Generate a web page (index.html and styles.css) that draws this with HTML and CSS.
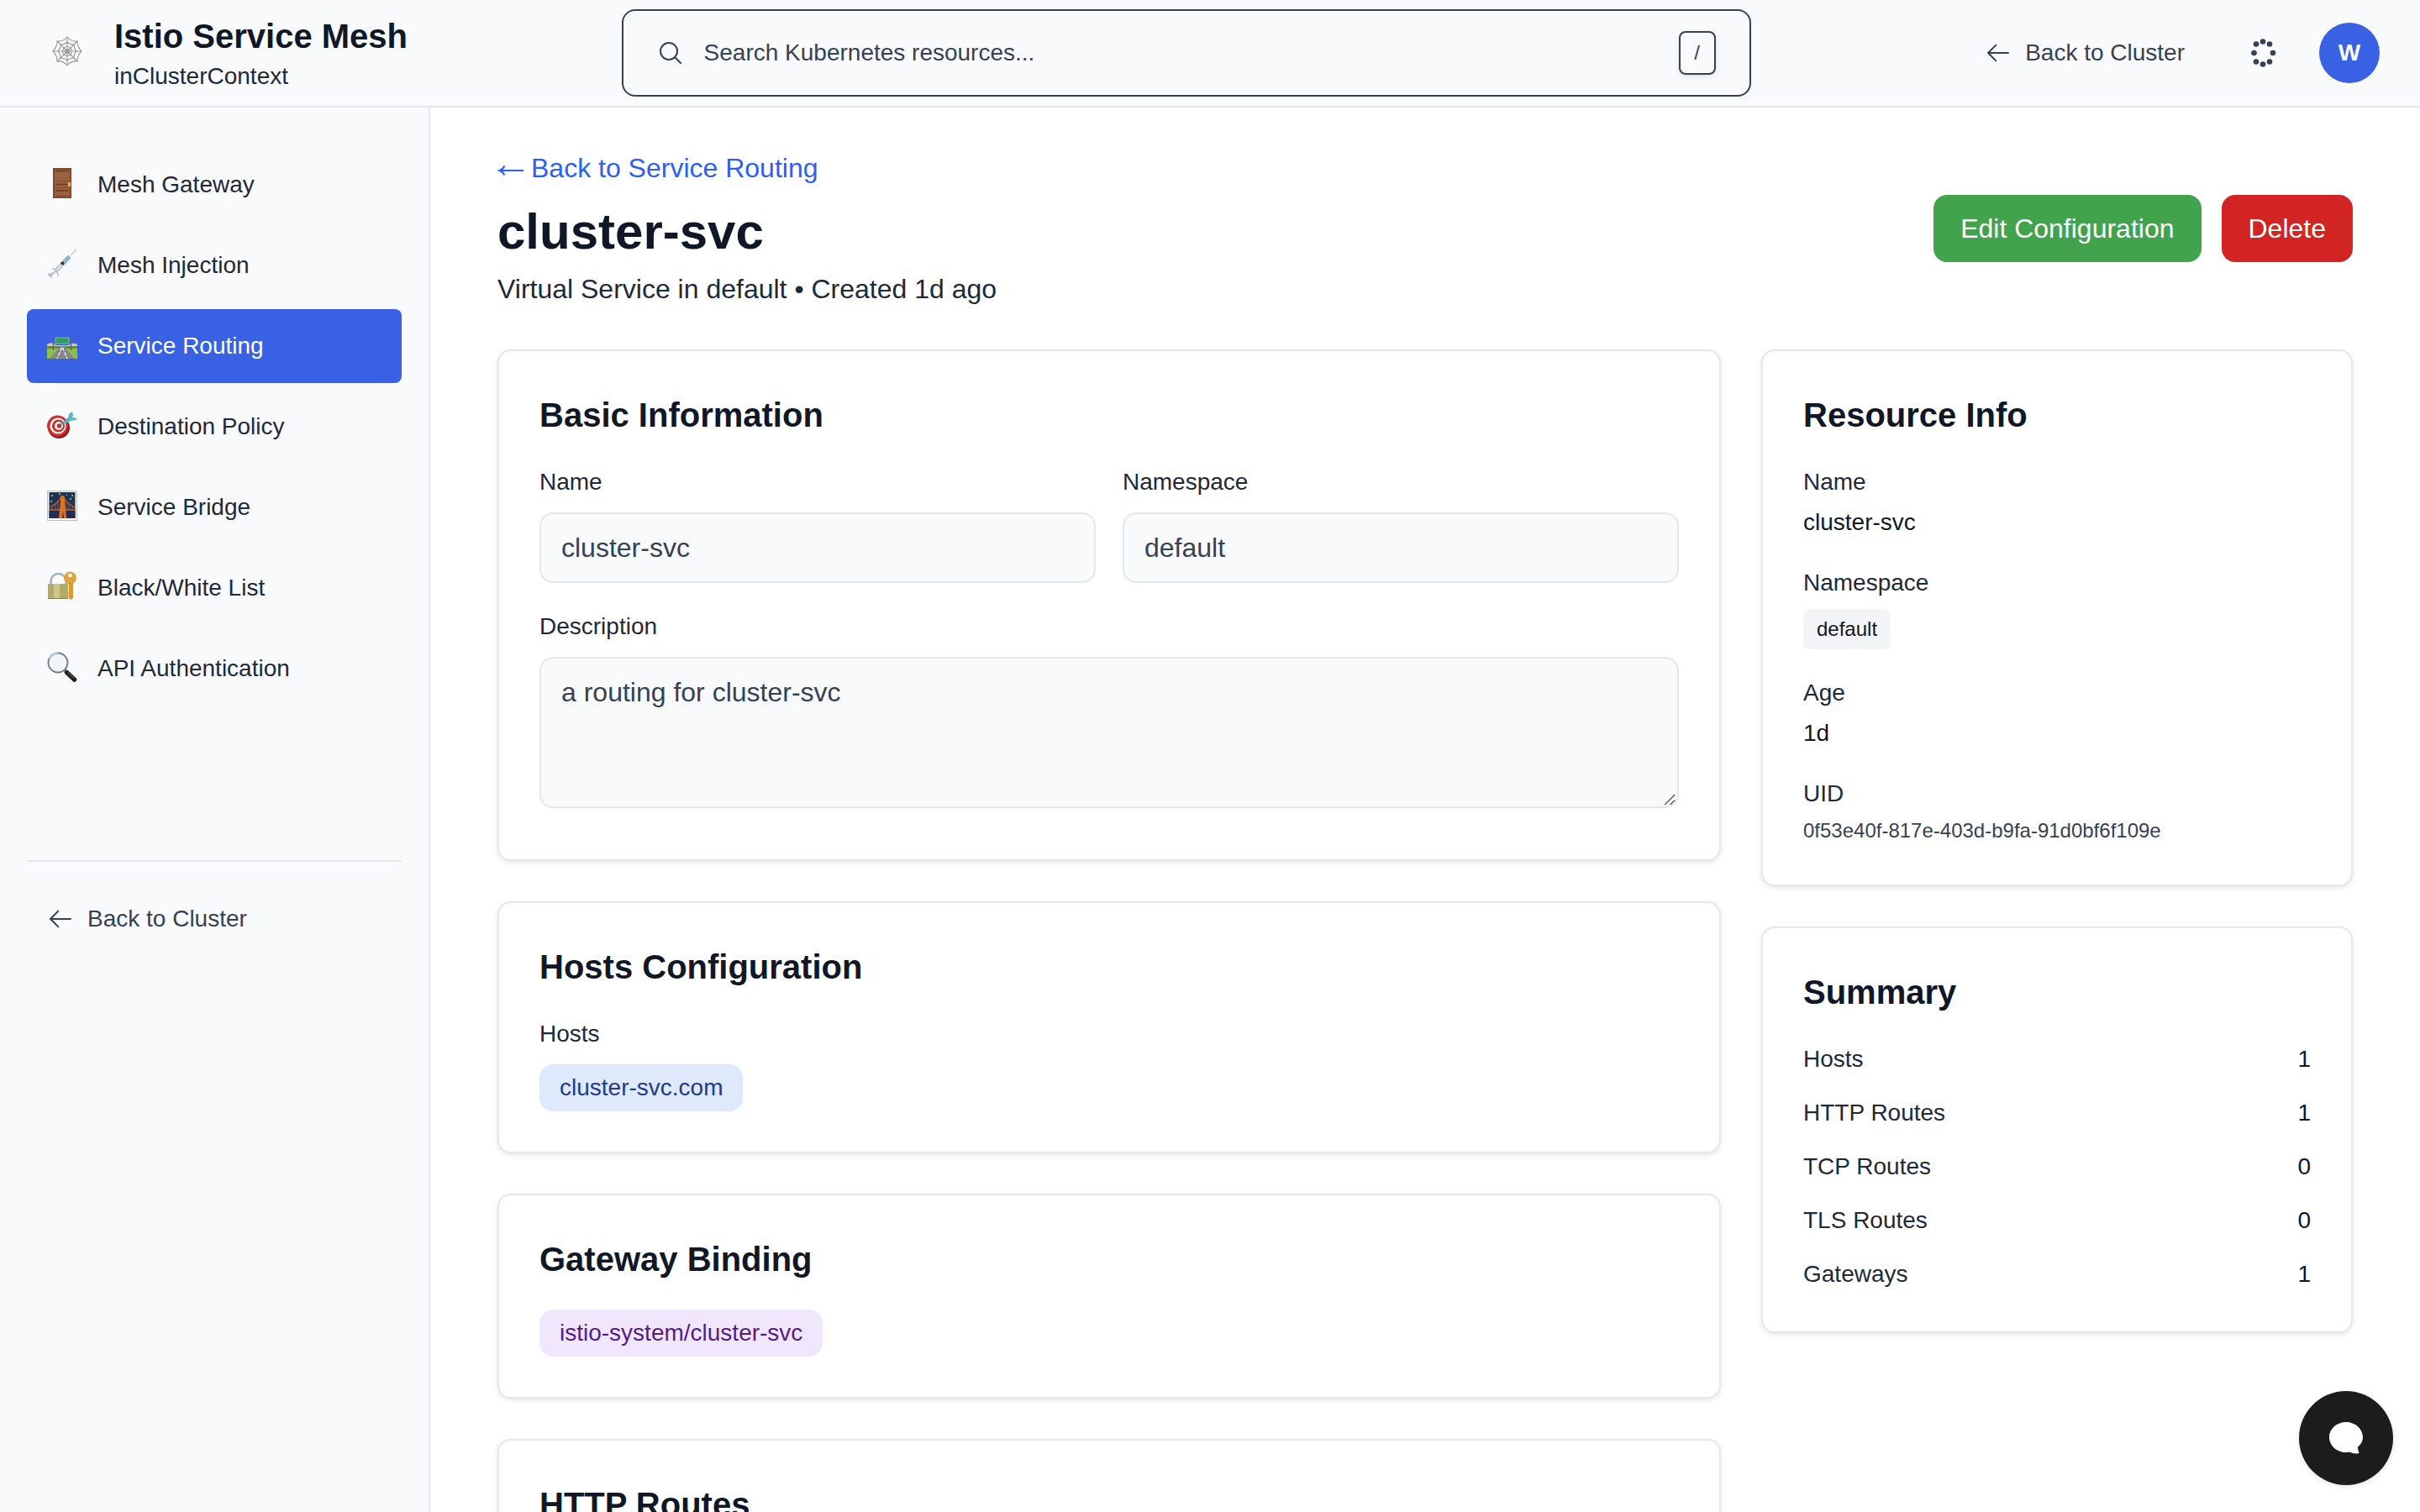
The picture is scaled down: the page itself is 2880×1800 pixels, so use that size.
FILE: index.html
```html
<!DOCTYPE html>
<html lang="en">
<head>
  <meta charset="utf-8">
  <title>cluster-svc - Istio Service Mesh</title>
  <meta name="viewport" content="width=device-width, initial-scale=1">
  <link rel="stylesheet" href="styles.css">
</head>
<body>
  <div class="app">
    <header class="topbar">
      <div class="brand">
        <div class="brand-logo">
          <svg class="emoji" viewBox="0 0 36 36" fill="none" stroke="#98999a" stroke-width="1.100" aria-hidden="true">
            <path d="M18 1v34M1 18h34M6 6l24 24M30 6L6 30"/>
            <path d="M18 1Q23 7 30 6Q30 13 35 18Q30 23 30 30Q23 29 18 35Q13 29 6 30Q6 23 1 18Q6 13 6 6Q13 7 18 1z"/>
            <path d="M18 7Q21 10 26 10Q26 15 29 18Q26 21 26 26Q21 26 18 29Q15 26 10 26Q10 21 7 18Q10 15 10 10Q15 10 18 7z"/>
            <circle cx="18" cy="18" r="5.500"/>
            <circle cx="18" cy="18" r="2.500"/>
          </svg>
        </div>
        <div>
          <div class="brand-title">Istio Service Mesh</div>
          <div class="brand-context">inClusterContext</div>
        </div>
      </div>

      <label class="search">
        <svg class="icon" viewBox="0 0 24 24" aria-hidden="true"><path d="M21 21l-5.197-5.197m0 0A7.500 7.500 0 1 0 5.197 5.197a7.500 7.500 0 0 0 10.607 10.607z"/></svg>
        <input class="search-input" type="text" placeholder="Search Kubernetes resources..." aria-label="Search Kubernetes resources">
        <kbd class="search-key">/</kbd>
      </label>

      <div class="actions">
        <a class="back-link" href="#cluster">
          <svg class="icon" viewBox="0 0 24 24" aria-hidden="true"><path d="M10 19l-7-7m0 0l7-7m-7 7h18"/></svg>
          <span>Back to Cluster</span>
        </a>
        <button class="icon-button" type="button" aria-label="Theme">
          <svg class="dots" viewBox="0 0 40 40" fill="#364153" aria-hidden="true">
            <circle cx="21" cy="6.500" r="3.300"/><circle cx="13" cy="9.500" r="3.300"/><circle cx="29" cy="9.500" r="3.300"/>
            <circle cx="10.500" cy="20" r="3.300"/><circle cx="33" cy="20" r="3.300"/>
            <circle cx="13" cy="30.500" r="3.300"/><circle cx="29" cy="30.500" r="3.300"/><circle cx="21" cy="33.500" r="3.300"/>
          </svg>
        </button>
        <button class="avatar" type="button">W</button>
      </div>
    </header>

    <div class="body">
      <aside class="sidebar">
        <nav class="nav">
          <a class="nav-item" href="#gateway">
            <svg class="emoji nav-icon" viewBox="0 0 36 36" aria-hidden="true">
              <rect x="7" width="22" height="36" fill="#7c4a2c"/>
              <rect x="9" y="2" width="18" height="32" fill="#9a6140"/>
              <path d="M10 3.500h16M10 19.500h16M10 27h16" stroke="#6a3b22" stroke-width="1.500"/>
              <path d="M10 16h16M10 23.500h16M10 33h16" stroke="#80492b"/>
              <rect x="25" y="17" width="3" height="5" fill="#e2b63c"/>
            </svg>
            <span>Mesh Gateway</span>
          </a>
          <a class="nav-item" href="#injection">
            <svg class="emoji nav-icon" viewBox="0 0 36 36" aria-hidden="true">
              <path d="M28 8L35 1" stroke="#aeb4b8" stroke-width="1"/>
              <path d="M9 25L25 8l3 3L12 28z" fill="#d5e2ec" stroke="#9aa5ad"/>
              <path d="M19 15l6-7 3 3-6 7z" fill="#8db7dc"/>
              <path d="M5.500 24.500q3-2 6 3t.500 5M7 30l5-5" fill="none" stroke="#b9bdc0" stroke-width="1.500"/>
              <path d="M1.500 30l4 4M3.500 32.500l4-4" stroke="#b9bcbe" stroke-width="2.500"/>
              <circle cx="18.500" cy="17.500" r="2" fill="#26303a"/>
            </svg>
            <span>Mesh Injection</span>
          </a>
          <a class="nav-item is-active" href="#routing" aria-current="page">
            <svg class="emoji nav-icon" viewBox="0 0 36 36" aria-hidden="true">
              <path d="M0 18q4-3 8-1l3 2h14l4-2q4-1 7 1v4H0z" fill="#d9c4bf"/>
              <rect y="20" width="36" height="15" fill="#8fbf45"/>
              <rect y="20" width="36" height="3" fill="#628e34"/>
              <path d="M16 20h4l13 15H3z" fill="#85878b"/>
              <path d="M17.500 22L12 35M18.500 22L24 35" stroke="#fff" stroke-width="1.200" stroke-dasharray="4 2"/>
              <path d="M7.500 10v15M28.500 10v15" stroke="#55667e" stroke-width="1.500"/>
              <rect x="10" y="10" width="16" height="7" fill="#2f9a62" stroke="#8cc4a8" stroke-width=".8"/>
            </svg>
            <span>Service Routing</span>
          </a>
          <a class="nav-item" href="#destination">
            <svg class="emoji nav-icon" viewBox="0 0 36 36" aria-hidden="true">
              <circle cx="14" cy="21" r="13" fill="#8e1d1a"/>
              <circle cx="12.500" cy="19" r="12.500" fill="#cf3330"/>
              <circle cx="13" cy="19" r="9.500" fill="#fff"/>
              <circle cx="13.500" cy="19" r="7.500" fill="#c92d2b"/>
              <circle cx="14" cy="19" r="5" fill="#fff"/>
              <circle cx="14.500" cy="19" r="2.800" fill="#c92d2b"/>
              <path d="M15 18.500L27 9" stroke="#3b9bab" stroke-width="2"/>
              <path d="M19 15l6-5 1-5 4-3 1 4-1 3 6 1-2 2-6 1-8 4z" fill="#56b8c6"/>
            </svg>
            <span>Destination Policy</span>
          </a>
          <a class="nav-item" href="#bridge">
            <svg class="emoji nav-icon" viewBox="0 0 36 36" aria-hidden="true">
              <rect x=".5" y=".5" width="35" height="35" fill="#fff" stroke="#b9bfc1"/>
              <rect x="2.500" y="2" width="31" height="31" fill="#1b3354"/>
              <rect x="2.500" y="24" width="31" height="9" fill="#232d52"/>
              <path d="M2.500 20Q13 16 17 7M33.500 20Q23 16 19 7M2.500 23h31" fill="none" stroke="#c8642a" stroke-width="1.300"/>
              <path d="M6 19v4M10 16v7M13 13v10M23 13v10M26 16v7M30 19v4" stroke="#b4602e" stroke-width=".9"/>
              <path d="M14 33L16.500 6h4L23 33h-3l-1-9-1 9z" fill="#e06f22"/>
              <path d="M5 6h2M14 4h2M29 6h2M4 13h2M27 10h2M23 5h1" stroke="#e8c34a" stroke-width="1.500"/>
            </svg>
            <span>Service Bridge</span>
          </a>
          <a class="nav-item" href="#list">
            <svg class="emoji nav-icon" viewBox="0 0 36 36" aria-hidden="true">
              <path d="M4.500 16v-4a9 9 0 0 1 18 0v4" fill="none" stroke="#9fb0c4" stroke-width="2.500"/>
              <rect x="1" y="15" width="24" height="18" rx="1" fill="#b3ab66"/>
              <rect x="8" y="15" width="7" height="18" fill="#cfc88d"/>
              <path d="M1 32.500h24" stroke="#858049" stroke-width="1"/>
              <circle cx="27.500" cy="8" r="7.500" fill="#dca43c"/>
              <path d="M26 13h5v19l-2.500 2-2.500-2-1-2 1-2-1-2 1-3z" fill="#d79b34"/>
              <circle cx="27.500" cy="5" r="2.300" fill="#fff"/>
            </svg>
            <span>Black/White List</span>
          </a>
          <a class="nav-item" href="#auth">
            <svg class="emoji nav-icon" viewBox="0 0 36 36" aria-hidden="true">
              <path d="M20 21l4 4" stroke="#8a8f94" stroke-width="3"/>
              <path d="M23.500 24.500l9 8.500" stroke="#222426" stroke-width="5.500" stroke-linecap="round"/>
              <path d="M25 24.500l7 6.500" stroke="#6b6e70" stroke-width="1"/>
              <circle cx="13" cy="13" r="11.500" fill="#f3f4f5" stroke="#6f7a88" stroke-width="1.800"/>
              <path d="M3 8a11.500 11.500 0 0 1 10-6.500" fill="none" stroke="#a9c4e6" stroke-width="1.800"/>
            </svg>
            <span>API Authentication</span>
          </a>
        </nav>
        <div class="sidebar-foot">
          <a class="back-link" href="#cluster">
            <svg class="icon" viewBox="0 0 24 24" aria-hidden="true"><path d="M10 19l-7-7m0 0l7-7m-7 7h18"/></svg>
            <span>Back to Cluster</span>
          </a>
        </div>
      </aside>

      <main class="main">
        <div class="page-head">
          <div>
            <a class="crumb" href="#routing">
              <svg class="crumb-arrow" viewBox="0 0 32 32" aria-hidden="true"><path d="M3 19h28M8.500 13.500q-2 4-6 5.500q4 1.500 6 5.500"/></svg>
              <span>Back to Service Routing</span>
            </a>
            <h1 class="page-title">cluster-svc</h1>
            <p class="page-sub">Virtual Service in default • Created 1d ago</p>
          </div>
          <div class="page-buttons">
            <button class="button button-edit" type="button">Edit Configuration</button>
            <button class="button button-delete" type="button">Delete</button>
          </div>
        </div>

        <div class="grid">
          <div class="column column-wide">
            <section class="card">
              <h2 class="card-title">Basic Information</h2>
              <div class="fields">
                <div>
                  <label class="label" for="name">Name</label>
                  <input class="field" id="name" type="text" value="cluster-svc" readonly>
                </div>
                <div>
                  <label class="label" for="namespace">Namespace</label>
                  <input class="field" id="namespace" type="text" value="default" readonly>
                </div>
              </div>
              <div>
                <label class="label" for="description">Description</label>
                <textarea class="field field-area" id="description" rows="3" readonly>a routing for cluster-svc</textarea>
              </div>
            </section>

            <section class="card">
              <h2 class="card-title">Hosts Configuration</h2>
              <div class="label">Hosts</div>
              <div class="tags"><span class="tag tag-blue">cluster-svc.com</span></div>
            </section>

            <section class="card">
              <h2 class="card-title">Gateway Binding</h2>
              <div class="tags"><span class="tag tag-purple">istio-system/cluster-svc</span></div>
            </section>

            <section class="card">
              <h2 class="card-title">HTTP Routes</h2>
            </section>
          </div>

          <div class="column">
            <section class="card">
              <h2 class="card-title">Resource Info</h2>
              <dl class="info">
                <div>
                  <dt class="info-key">Name</dt>
                  <dd class="info-value">cluster-svc</dd>
                </div>
                <div>
                  <dt class="info-key">Namespace</dt>
                  <dd><span class="chip">default</span></dd>
                </div>
                <div>
                  <dt class="info-key">Age</dt>
                  <dd class="info-value">1d</dd>
                </div>
                <div>
                  <dt class="info-key">UID</dt>
                  <dd class="info-uid">0f53e40f-817e-403d-b9fa-91d0bf6f109e</dd>
                </div>
              </dl>
            </section>

            <section class="card">
              <h2 class="card-title">Summary</h2>
              <dl class="summary">
                <div class="summary-row"><dt>Hosts</dt><dd>1</dd></div>
                <div class="summary-row"><dt>HTTP Routes</dt><dd>1</dd></div>
                <div class="summary-row"><dt>TCP Routes</dt><dd>0</dd></div>
                <div class="summary-row"><dt>TLS Routes</dt><dd>0</dd></div>
                <div class="summary-row"><dt>Gateways</dt><dd>1</dd></div>
              </dl>
            </section>
          </div>
        </div>
      </main>
    </div>

    <button class="chat" type="button" aria-label="Open chat">
      <svg class="chat-icon" viewBox="0 0 40 38" fill="#fff" aria-hidden="true">
        <path d="M20 0C9 0 0 8 0 18s9 18 20 18q2 0 4-.5 5 2.500 10 2 2-.5 1-2.500-1.500-3-1-5.500Q40 25 40 18C40 8 31 0 20 0z"/>
      </svg>
    </button>
  </div>
</body>
</html>
```

FILE: styles.css
```css
* {
  box-sizing: border-box;
}

body,
h1,
h2,
p,
dl,
dd {
  margin: 0;
}

body {
  font-family: "Liberation Sans", Arial, sans-serif;
  font-size: 32px;
  line-height: 48px;
  color: #101828;
  background: #fff;
}

a {
  color: inherit;
  text-decoration: none;
}

button,
input,
textarea {
  font: inherit;
  color: inherit;
}

button {
  border: 0;
  padding: 0;
  background: none;
  cursor: pointer;
}

.app {
  display: flex;
  flex-direction: column;
  height: 100vh;
  overflow: hidden;
}

.icon {
  flex: none;
  width: 32px;
  height: 32px;
  fill: none;
  stroke: #364153;
  stroke-width: 1.5;
  stroke-linecap: round;
  stroke-linejoin: round;
}

.emoji {
  flex: none;
  width: 36px;
  height: 36px;
}

/* Top bar */

.topbar {
  flex: none;
  display: flex;
  align-items: center;
  justify-content: space-between;
  height: 128px;
  padding: 0 48px;
  background: #f9fafc;
  border-bottom: 2px solid #e5e7ea;
}

.brand {
  display: flex;
  align-items: center;
  gap: 24px;
}

.brand-logo {
  display: flex;
  justify-content: center;
  width: 64px;
  padding-bottom: 4px;
}

.brand-title {
  font-size: 40px;
  font-weight: 700;
  line-height: 56px;
}

.brand-context {
  font-size: 28px;
  line-height: 40px;
  color: #1e2939;
}

.search {
  flex: 0 1 1344px;
  display: flex;
  align-items: center;
  gap: 24px;
  height: 104px;
  padding: 0 40px;
  border: 2px solid #364153;
  border-radius: 16px;
}

.search-input {
  flex: 1;
  min-width: 0;
  padding: 0;
  border: 0;
  outline: 0;
  background: none;
  font-size: 28px;
  line-height: 40px;
}

.search-input::placeholder {
  color: #364153;
  opacity: 1;
}

.search-key {
  display: flex;
  align-items: center;
  justify-content: center;
  width: 44px;
  height: 52px;
  border: 2px solid #364153;
  border-radius: 8px;
  font-family: inherit;
  font-size: 24px;
  line-height: 32px;
  color: #364153;
  box-shadow: 0 2px 6px rgba(0, 0, 0, 0.1);
}

.actions {
  display: flex;
  align-items: center;
  gap: 32px;
}

.back-link {
  display: flex;
  align-items: center;
  gap: 16px;
  padding: 24px;
  font-size: 28px;
  line-height: 40px;
  color: #364153;
}

.icon-button {
  display: flex;
  padding: 16px;
}

.dots {
  width: 40px;
  height: 40px;
}

.avatar {
  width: 72px;
  height: 72px;
  border-radius: 50%;
  background: #3861e3;
  color: #fff;
  font-size: 28px;
  font-weight: 700;
  line-height: 40px;
}

/* Sidebar */

.body {
  flex: 1;
  min-height: 0;
  display: flex;
}

.sidebar {
  flex: none;
  width: 512px;
  padding: 48px 32px;
  background: #f9fafc;
  border-right: 2px solid #e5e7ea;
}

.nav {
  display: flex;
  flex-direction: column;
  gap: 8px;
}

.nav-item {
  display: flex;
  align-items: center;
  gap: 24px;
  padding: 24px;
  border-radius: 8px;
  font-size: 28px;
  line-height: 40px;
  color: #1e2939;
}

.nav-icon {
  margin-bottom: 4px;
}

.is-active {
  background: #3861e3;
  color: #fff;
}

.sidebar-foot {
  margin-top: 184px;
  padding-top: 24px;
  border-top: 2px solid #e5e7ea;
}

/* Main column */

.main {
  flex: 1;
  min-width: 0;
  padding: 48px 80px;
  overflow-y: auto;
  scrollbar-width: none;
}

.page-head {
  display: flex;
  align-items: center;
  justify-content: space-between;
  margin-bottom: 48px;
}

.crumb {
  display: flex;
  align-items: center;
  gap: 8px;
  margin-bottom: 16px;
  color: #2b5ff6;
}

.crumb-arrow {
  flex: none;
  width: 32px;
  height: 32px;
  fill: none;
  stroke: currentColor;
  stroke-width: 2;
}

.page-title {
  margin-bottom: 8px;
  font-size: 60px;
  font-weight: 700;
  line-height: 72px;
}

.page-sub {
  color: #1e2939;
}

.page-buttons {
  display: flex;
  gap: 24px;
}

.button {
  padding: 16px 32px;
  border-radius: 16px;
  color: #fff;
}

.button-edit {
  background: #41a34b;
}

.button-delete {
  background: #d22422;
}

.grid {
  display: grid;
  grid-template-columns: repeat(3, minmax(0, 1fr));
  gap: 48px;
}

.column {
  display: flex;
  flex-direction: column;
  gap: 48px;
}

.column-wide {
  grid-column: span 2;
}

.card {
  padding: 48px;
  border: 2px solid #e5e7ea;
  border-radius: 16px;
  background: #fff;
  box-shadow: 0 2px 6px rgba(0, 0, 0, 0.1);
}

.card-title {
  margin-bottom: 32px;
  font-size: 40px;
  font-weight: 700;
  line-height: 56px;
}

.card-title:last-child {
  margin-bottom: 0;
}

.fields {
  display: grid;
  grid-template-columns: 1fr 1fr;
  gap: 32px;
  margin-bottom: 32px;
}

.label {
  display: block;
  margin-bottom: 16px;
  font-size: 28px;
  line-height: 40px;
  color: #1e2939;
}

.field {
  width: 100%;
  height: 84px;
  padding: 16px 24px;
  border: 2px solid #e5e7ea;
  border-radius: 16px;
  outline: 0;
  background: #f9fafc;
  color: #364153;
}

input.field {
  display: block;
}

.field-area {
  height: 180px;
  resize: vertical;
}

/* Two diagonal grip lines in the corner of the text area */
.field-area::-webkit-resizer {
  background: url("data:image/svg+xml,%3Csvg xmlns='http://www.w3.org/2000/svg' viewBox='0 0 16 16'%3E%3Cpath d='M0 14L13 1M7 14L13 8' stroke='%23555' stroke-width='1.5'/%3E%3C/svg%3E") no-repeat center / 100% 100%;
}

.tags {
  display: flex;
  flex-wrap: wrap;
  gap: 16px;
}

.tag {
  padding: 8px 24px;
  border-radius: 16px;
  font-size: 28px;
  line-height: 40px;
}

.tag-blue {
  background: #dee9fb;
  color: #23398a;
}

.tag-purple {
  background: #f1e7fd;
  color: #561a8b;
}

/* Side cards */

.info {
  display: flex;
  flex-direction: column;
  gap: 32px;
}

.info-key {
  margin-bottom: 8px;
  font-size: 28px;
  line-height: 40px;
  color: #1e2939;
}

.info-value {
  font-size: 28px;
  line-height: 40px;
}

.chip {
  display: inline-block;
  padding: 8px 16px;
  border-radius: 8px;
  background: #f3f4f6;
  font-size: 24px;
  line-height: 32px;
}

.info-uid {
  font-size: 24px;
  line-height: 32px;
  color: #364153;
}

.summary {
  display: flex;
  flex-direction: column;
  gap: 24px;
}

.summary-row {
  display: flex;
  justify-content: space-between;
  font-size: 28px;
  line-height: 40px;
}

.summary-row dt {
  color: #1e2939;
}

/* Chat launcher, floats over the page */

.chat {
  position: fixed;
  right: 32px;
  bottom: 32px;
  display: flex;
  align-items: center;
  justify-content: center;
  width: 112px;
  height: 112px;
  border-radius: 50%;
  background: #1c1c1c;
  box-shadow: 0 2px 6px rgba(0, 0, 0, 0.1);
}

.chat-icon {
  width: 40px;
  height: 38px;
}
```
